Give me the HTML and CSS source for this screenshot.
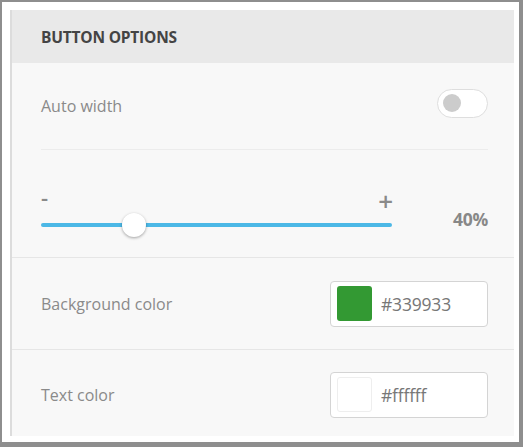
FILE: index.html
```html
<!DOCTYPE html>
<html>
<head>
<meta charset="utf-8">
<link rel="stylesheet" href="styles.css">
</head>
<body>
<div class="window">
  <div class="panel">
    <div class="header">BUTTON OPTIONS</div>
    <div class="section">
      <div class="row-auto">
        <span class="label">Auto width</span>
        <span class="toggle"><span class="toggle-knob"></span></span>
      </div>
      <div class="divider"></div>
      <div class="slider-row">
        <div class="slider">
          <div class="marks"><span class="minus">-</span><span class="plus">+</span></div>
          <div class="track"><span class="knob"></span></div>
        </div>
        <span class="pct">40%</span>
      </div>
    </div>
    <div class="color-row">
      <span class="label">Background color</span>
      <div class="color-input">
        <span class="swatch swatch-green"></span>
        <span class="hex">#339933</span>
      </div>
    </div>
    <div class="color-row">
      <span class="label">Text color</span>
      <div class="color-input">
        <span class="swatch swatch-white"></span>
        <span class="hex">#ffffff</span>
      </div>
    </div>
  </div>
</div>
</body>
</html>
```

FILE: styles.css
```css
* { box-sizing: border-box; }
html, body { margin: 0; padding: 0; }
body {
  font-family: "Open Sans", "Noto Sans", sans-serif;
  background: #ffffff;
}
.window {
  width: 523px;
  height: 447px;
  border: 2px solid #8e8e8e;
  border-right-width: 4px;
  border-bottom-width: 5px;
  background: #ffffff;
  padding: 8px 5px 6px 8px;
}
.panel {
  height: 100%;
  overflow: hidden;
  background: #f8f8f8;
  border-left: 2px solid #dcdcdc;
}
.header {
  height: 53px;
  background: #e9e9e9;
  padding-left: 29px;
  display: flex;
  align-items: center;
  font-size: 15.5px;
  font-weight: 700;
  color: #444444;
  letter-spacing: -0.2px;
}
.section {
  padding: 0 26px 0 29px;
  border-bottom: 1px solid #e6e6e6;
  height: 195px;
}
.label {
  font-size: 16px;
  color: #8a8a8a;
}
.row-auto {
  height: 86px;
  display: flex;
  align-items: center;
  justify-content: space-between;
}
.toggle {
  width: 51px;
  height: 29px;
  border-radius: 15px;
  background: #ffffff;
  border: 1px solid #dedede;
  display: flex;
  align-items: center;
  padding-left: 5px;
  margin-top: -6px;
}
.toggle-knob {
  width: 18px;
  height: 18px;
  border-radius: 50%;
  background: #cccccc;
}
.divider {
  height: 1px;
  background: #ececec;
}
.slider-row {
  display: flex;
  align-items: flex-end;
  padding-top: 34px;
}
.slider {
  width: 351px;
}
.marks {
  display: flex;
  justify-content: space-between;
  align-items: flex-start;
  color: #8a8a8a;
  height: 26px;
}
.minus {
  font-size: 22px;
  line-height: 26px;
  font-weight: 600;
}
.plus {
  font-size: 26px;
  line-height: 26px;
  font-weight: 600;
  margin-top: 4px;
  margin-right: -1px;
}
.track {
  position: relative;
  height: 4px;
  border-radius: 2px;
  background: #4cb8e6;
  margin-top: 13px;
}
.knob {
  position: absolute;
  left: 81px;
  top: -10px;
  width: 24px;
  height: 24px;
  border-radius: 50%;
  background: #ffffff;
  box-shadow: 0 1px 3px rgba(0,0,0,0.35);
}
.pct {
  margin-left: auto;
  font-size: 17.5px;
  font-weight: 700;
  color: #888888;
  line-height: 22px;
  margin-bottom: -3px;
  letter-spacing: -0.3px;
}
.color-row {
  height: 92px;
  flex-shrink: 0;
  border-bottom: 1px solid #e6e6e6;
  padding: 0 26px 0 29px;
  display: flex;
  align-items: center;
  justify-content: space-between;
}
.color-row + .color-row { height: 90px; }
.color-input {
  width: 158px;
  height: 46px;
  background: #ffffff;
  border: 1px solid #d4d4d4;
  border-radius: 4px;
  display: flex;
  align-items: center;
  padding-left: 6px;
  gap: 9px;
}
.swatch {
  width: 35px;
  height: 35px;
  border-radius: 3px;
}
.swatch-green { background: #339933; }
.swatch-white { background: #ffffff; border: 1px solid #eeeeee; }
.hex {
  font-size: 17.5px;
  color: #777777;
  letter-spacing: -0.2px;
}
```
